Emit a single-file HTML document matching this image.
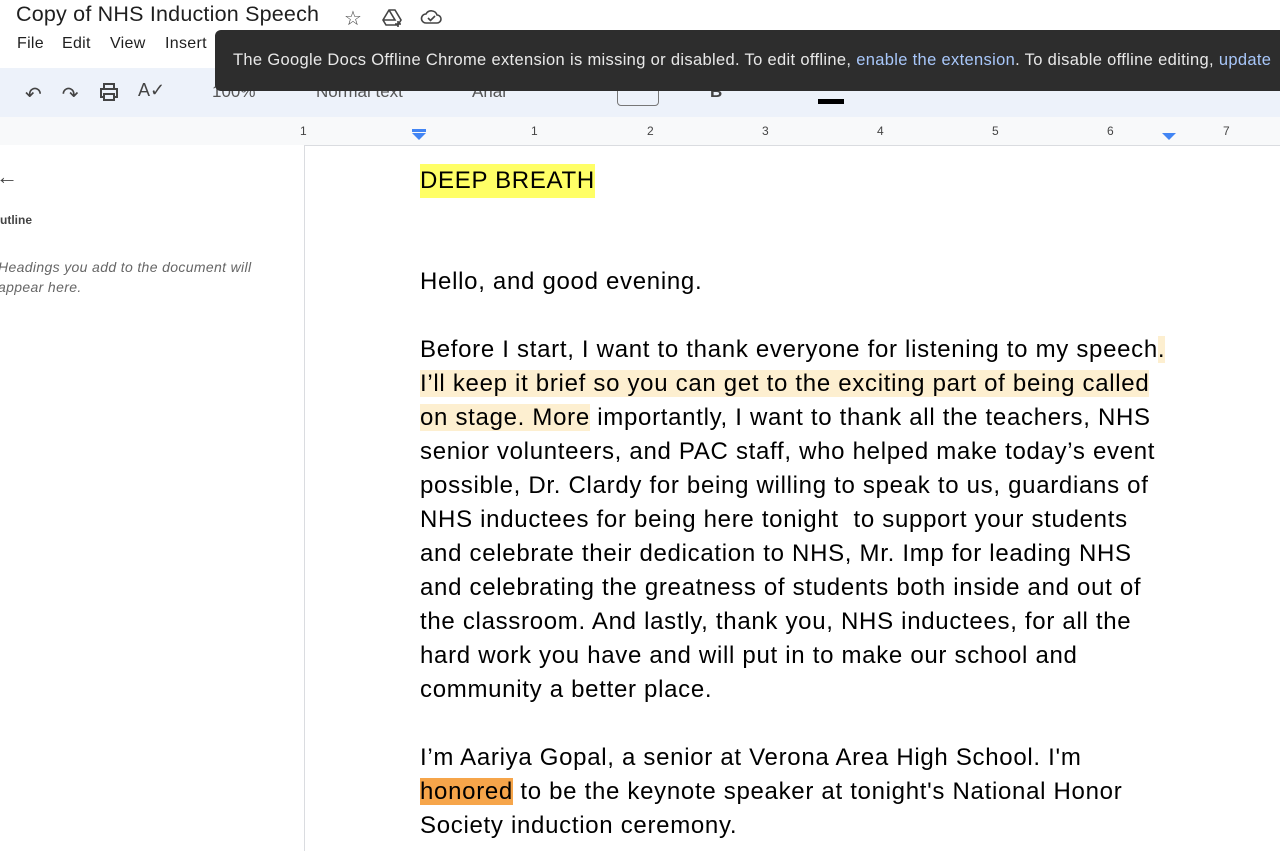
<!DOCTYPE html>
<html><head><style>
body{margin:0;width:1280px;height:851px;overflow:hidden;background:#fff;font-family:"Liberation Sans",sans-serif;position:relative}
.a{position:absolute}
.title{left:16px;top:2px;font-size:21.5px;color:#1f1f1f;letter-spacing:0.2px}
.menu{top:35px;font-size:16px;color:#1f1f1f;letter-spacing:0.3px}
.tb{left:0;top:68px;width:1280px;height:49px;background:#edf2fa}
.tip{left:215px;top:30px;width:1070px;height:61px;background:#2d2d2d;border-radius:6px 0 0 6px;color:#e8e8e8;font-size:16.5px;letter-spacing:0.33px;line-height:60px;padding-left:18px;box-sizing:border-box;white-space:nowrap}
.tip b{font-weight:normal;color:#a8c7fa}
.ruler{left:0;top:117px;width:1280px;height:28px;background:#f8f9fa;border-bottom:1px solid #dadce0}
.side{left:0;top:145px;width:304px;height:706px;border-right:1px solid #dadce0;background:#fff}
.doc{left:420px;top:2px;font-size:24px;letter-spacing:0.7px;color:#000;line-height:34px;white-space:nowrap}
.l{position:absolute;left:0}
.hl{background:#fdefd0}
.rn{position:absolute;top:124px;font-size:12px;color:#444}
</style></head><body>
<div class="a title">Copy of NHS Induction Speech</div>
<div class="a" style="left:344px;top:6px;font-size:20px;color:#444">☆</div>
<svg class="a" style="left:382px;top:8px" width="22" height="20" viewBox="0 0 22 20"><path d="M7 2h6l6 10-3 5H4l-3-5z M7 2l6 10H1" fill="none" stroke="#444" stroke-width="1.6"/><path d="M16 13v6M13 16h6" stroke="#444" stroke-width="1.6"/></svg>
<svg class="a" style="left:420px;top:9px" width="22" height="16" viewBox="0 0 22 16"><path d="M6 14h11a4 4 0 0 0 0-8 6 6 0 0 0-11-1 4.5 4.5 0 0 0 0 9z" fill="none" stroke="#444" stroke-width="1.6"/><path d="M8 9l2.5 2.5L15 7" fill="none" stroke="#444" stroke-width="1.6"/></svg>
<div class="a menu" style="left:17px">File</div>
<div class="a menu" style="left:62px">Edit</div>
<div class="a menu" style="left:110px">View</div>
<div class="a menu" style="left:165px">Insert</div>
<div class="a tb"></div>
<div class="a" style="left:25px;top:82px;font-size:20px;color:#444;letter-spacing:20px">↶↷</div>
<svg class="a" style="left:99px;top:83px" width="20" height="18"><rect x="2" y="6" width="16" height="8" fill="none" stroke="#444" stroke-width="2"/><rect x="5" y="1" width="10" height="5" fill="none" stroke="#444" stroke-width="2"/><rect x="5" y="11" width="10" height="6" fill="#edf2fa" stroke="#444" stroke-width="2"/></svg>
<div class="a" style="left:138px;top:80px;font-size:18px;color:#444">A✓</div>
<div class="a" style="left:212px;top:82px;font-size:17px;color:#555">100%</div>
<div class="a" style="left:316px;top:82px;font-size:17px;color:#555">Normal text</div>
<div class="a" style="left:472px;top:82px;font-size:17px;color:#555">Arial</div>
<div class="a" style="left:617px;top:80px;width:40px;height:24px;border:1px solid #777;border-radius:4px"></div>
<div class="a" style="left:710px;top:82px;font-size:17px;color:#444;font-weight:bold">B</div>
<div class="a" style="left:818px;top:99px;width:26px;height:5px;background:#000"></div>
<div class="a tip">The Google Docs Offline Chrome extension is missing or disabled. To edit offline, <b>enable the extension</b>. To disable offline editing, <b>update</b></div>
<div class="a ruler"></div>
<div class="rn" style="left:300px">1</div><div class="rn" style="left:531px">1</div><div class="rn" style="left:647px">2</div><div class="rn" style="left:762px">3</div><div class="rn" style="left:877px">4</div><div class="rn" style="left:992px">5</div><div class="rn" style="left:1107px">6</div><div class="rn" style="left:1223px">7</div>
<div class="a" style="left:412px;top:129px;width:14px;height:3px;background:#4285f4"></div>
<div class="a" style="left:412px;top:133px;width:0;height:0;border-left:7px solid transparent;border-right:7px solid transparent;border-top:7px solid #4285f4"></div>
<div class="a" style="left:1162px;top:133px;width:0;height:0;border-left:7px solid transparent;border-right:7px solid transparent;border-top:7px solid #4285f4"></div>
<div class="a side"></div>
<div class="a" style="left:-4px;top:164px;font-size:22px;color:#444">←</div>
<div class="a" style="left:0;top:213px;font-size:12px;color:#444;font-weight:bold">utline</div>
<div class="a" style="left:-2px;top:257px;font-size:14px;letter-spacing:0.35px;color:#666;font-style:italic;line-height:20px">Headings you add to the document will<br>appear here.</div>
<div class="a doc">
<div class="l" style="top:162px;background:#ffff66">DEEP BREATH</div>
<div class="l" style="top:263px">Hello, and good evening.</div>
<div class="l" style="top:331px">Before I start, I want to thank everyone for listening to my speech<span class="hl">. </span></div>
<div class="l" style="top:365px"><span class="hl">I’ll keep it brief so you can get to the exciting part of being called </span></div>
<div class="l" style="top:399px"><span class="hl">on stage. More</span> importantly, I want to thank all the teachers, NHS</div>
<div class="l" style="top:433px">senior volunteers, and PAC staff, who helped make today’s event</div>
<div class="l" style="top:467px">possible, Dr. Clardy for being willing to speak to us, guardians of</div>
<div class="l" style="top:501px">NHS inductees for being here tonight&nbsp; to support your students</div>
<div class="l" style="top:535px">and celebrate their dedication to NHS, Mr. Imp for leading NHS</div>
<div class="l" style="top:569px">and celebrating the greatness of students both inside and out of</div>
<div class="l" style="top:603px">the classroom. And lastly, thank you, NHS inductees, for all the</div>
<div class="l" style="top:637px">hard work you have and will put in to make our school and</div>
<div class="l" style="top:671px">community a better place.</div>
<div class="l" style="top:739px">I’m Aariya Gopal, a senior at Verona Area High School. I'm</div>
<div class="l" style="top:773px"><span style="background:#f6a54a">honored</span> to be the keynote speaker at tonight's National Honor</div>
<div class="l" style="top:807px">Society induction ceremony.</div>
</div>
</body></html>
